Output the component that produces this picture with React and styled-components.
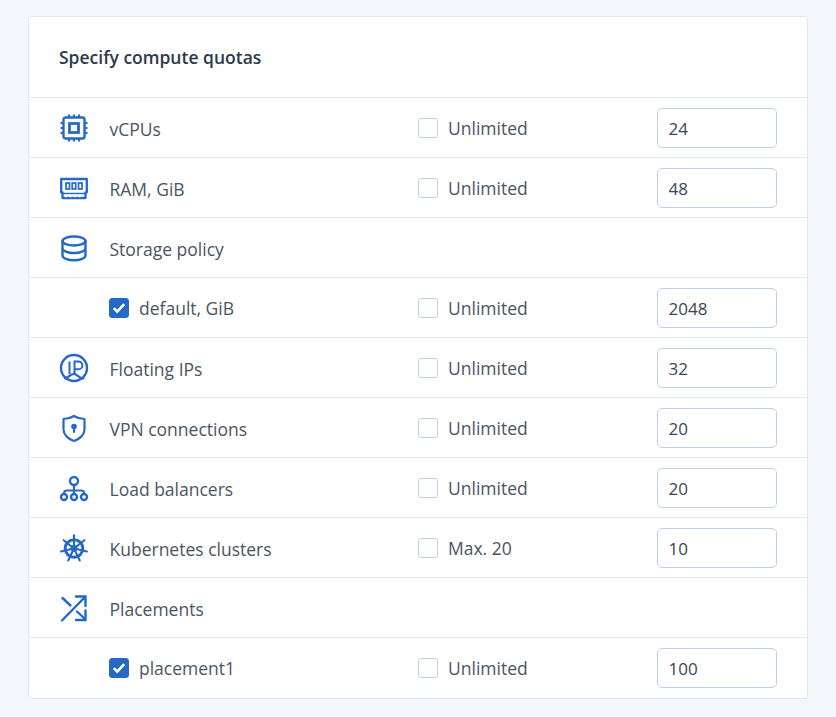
import React from 'react';
import styled, { createGlobalStyle } from 'styled-components';

const FONT = '"Open Sans", "Noto Sans", sans-serif';

const GlobalStyle = createGlobalStyle`
  html, body {
    margin: 0;
    padding: 0;
    background: #f4f7fc;
    font-family: ${FONT};
  }
`;

const Page = styled.div`
  width: 836px;
  height: 717px;
  padding: 16px 28px 0;
  box-sizing: border-box;
  overflow: hidden;
`;

const Card = styled.section`
  background: #fff;
  border: 1px solid #dfe8f6;
  border-radius: 3px;
  width: 780px;
  box-sizing: border-box;
  padding-bottom: 1px;
`;

const Title = styled.h2`
  margin: 0;
  height: 80px;
  padding: 0 30px 1px;
  box-sizing: border-box;
  display: flex;
  align-items: center;
  font-size: 17.5px;
  font-weight: 600;
  color: #2c3a4d;
`;

const Row = styled.div`
  display: grid;
  grid-template-columns: 80px 309px 239px 120px;
  align-items: center;
  height: 60px;
  box-sizing: border-box;
  border-top: 1px solid #dfe8f6;
  padding-right: 30px;
`;

const IconCell = styled.div`
  display: flex;
  justify-content: flex-start;
  padding-left: 30px;
  color: #2668c5;
`;

const Label = styled.div`
  font-size: 17.5px;
  color: #4a5564;
  display: flex;
  align-items: center;
  gap: 10px;
  line-height: 22px;
`;

const LabelText = styled.span`
  padding: ${p => (p.$withBox ? '0' : '2px 0 0 0.5px')};
`;

const Box = styled.span`
  width: 20px;
  height: 20px;
  box-sizing: border-box;
  border-radius: 3px;
  border: 1px solid ${p => (p.$checked ? '#2668c5' : '#bcd0ec')};
  background: ${p => (p.$checked ? '#2668c5' : '#fff')};
  display: inline-flex;
  align-items: center;
  justify-content: center;
  flex: none;
`;

const ValueInput = styled.input`
  width: 120px;
  height: 40px;
  box-sizing: border-box;
  border: 1px solid #bcd0ec;
  border-radius: 5px;
  padding: 1px 10.5px 0;
  font: 17px ${FONT};
  color: #3a4556;
  background: #fff;
  outline: none;
`;

const Svg = ({ children }) => (
  <svg width="30" height="30" viewBox="0 0 30 30" fill="none" stroke="currentColor" strokeWidth="2" strokeLinecap="round" strokeLinejoin="round">
    {children}
  </svg>
);

const CpuIcon = () => (
  <Svg>
    <rect x="4.500" y="4.500" width="21" height="21" rx="2" strokeWidth="2.400" />
    <rect x="10.500" y="10.500" width="9" height="9" strokeWidth="2.800" strokeLinejoin="miter" />
    <path d="M10 1.500v3M15 1.500v3M20 1.500v3M10 25.500v3M15 25.500v3M20 25.500v3M1.500 10h3M1.500 15h3M1.500 20h3M25.500 10h3M25.500 15h3M25.500 20h3" strokeLinecap="butt" strokeWidth="2.200" />
  </Svg>
);

const RamIcon = () => (
  <Svg>
    <path d="M2.200 6h25.600v13.500h-1.300V25H3.500v-5.500H2.200z" strokeWidth="2.300" strokeLinecap="butt" strokeLinejoin="round" />
    <path d="M3.500 20.500h23" strokeWidth="1.500" strokeLinecap="butt" />
    <rect x="7" y="10" width="3.500" height="6" strokeWidth="1.700" strokeLinejoin="miter" />
    <rect x="13.200" y="10" width="3.500" height="6" strokeWidth="1.700" strokeLinejoin="miter" />
    <rect x="19.500" y="10" width="3.500" height="6" strokeWidth="1.700" strokeLinejoin="miter" />
    <path d="M6 23h18" stroke="#fff" strokeDasharray="2 2.500" strokeWidth="2.400" strokeLinecap="butt" />
  </Svg>
);

const DbIcon = () => (
  <Svg>
    <ellipse cx="15" cy="8" rx="11.500" ry="4.500" strokeWidth="2.400" />
    <path d="M3.500 8v14.500c0 2.600 5.200 4.800 11.500 4.800s11.500-2.200 11.500-4.800V8M3.500 15.200c0 2.600 5.200 4.800 11.500 4.800s11.500-2.200 11.500-4.800" strokeWidth="2.400" />
  </Svg>
);

const IpIcon = () => (
  <Svg>
    <circle cx="15" cy="15" r="13" strokeWidth="2.400" />
    <path d="M10.500 8.500v12.500M15.500 21V8.500h4a3.900 3.900 0 0 1 0 7.800h-4" strokeWidth="2" strokeLinecap="butt" strokeLinejoin="miter" />
    <path d="M6 25.500c3.500-1 5.500-4.500 9-4.500 3.500 0 5 4.500 9.500 4.500" strokeWidth="2.200" />
  </Svg>
);

const ShieldIcon = () => (
  <Svg>
    <path d="M15 3c3.200 2 7 3 10.500 3v10.500c0 5-4.500 9.500-10.500 11.500-6-2-10.500-6.500-10.500-11.500V6C8 6 11.800 5 15 3z" strokeWidth="2.200" />
    <circle cx="15" cy="13.500" r="2.800" fill="currentColor" stroke="none" />
    <path d="M15 14v5" strokeWidth="2.200" />
  </Svg>
);

const TreeIcon = () => (
  <Svg>
    <circle cx="15" cy="8" r="4" strokeWidth="2.400" />
    <circle cx="5" cy="24" r="3" strokeWidth="2.400" />
    <circle cx="15" cy="24" r="3" strokeWidth="2.400" />
    <circle cx="25" cy="24" r="3" strokeWidth="2.400" />
    <path d="M15 12v9M5 21v-1a2.500 2.500 0 0 1 2.500-2.500h15A2.500 2.500 0 0 1 25 20v1" strokeWidth="2.200" strokeLinecap="butt" />
  </Svg>
);

const helmSpokes = [0, 1, 2, 3, 4, 5, 6].map(i => (i * 360) / 7);

const HelmIcon = () => (
  <Svg>
    <circle cx="15" cy="15.500" r="8.800" strokeWidth="3" />
    <circle cx="15" cy="15.500" r="3.400" fill="currentColor" stroke="none" />
    {helmSpokes.map(a => (
      <g key={a} transform={`rotate(${a} 15 15.500)`}>
        <path d="M15 14V2.200" strokeWidth="2.100" />
      </g>
    ))}
  </Svg>
);

const ShuffleIcon = () => (
  <Svg>
    <path d="M3 27.500 26.500 3.500M17 3.500h9.500V13M3.500 5l8 7.500M18 18.500l8.500 8M26.500 17.500v9.500H17" strokeWidth="2.400" strokeLinecap="round" strokeLinejoin="miter" />
  </Svg>
);

const Check = ({ checked }) => (
  <Box $checked={checked}>
    {checked && (
      <svg width="14" height="12" viewBox="0 0 14 12" fill="none">
        <path d="M1.800 6.200 5.200 9.600 12.200 2.200" stroke="#fff" strokeWidth="2.600" />
      </svg>
    )}
  </Box>
);

const rows = [
  { icon: <CpuIcon />, label: 'vCPUs', limit: 'Unlimited', value: '24' },
  { icon: <RamIcon />, label: 'RAM, GiB', limit: 'Unlimited', value: '48' },
  { icon: <DbIcon />, label: 'Storage policy' },
  { sub: true, label: 'default, GiB', limit: 'Unlimited', value: '2048' },
  { icon: <IpIcon />, label: 'Floating IPs', limit: 'Unlimited', value: '32' },
  { icon: <ShieldIcon />, label: 'VPN connections', limit: 'Unlimited', value: '20' },
  { icon: <TreeIcon />, label: 'Load balancers', limit: 'Unlimited', value: '20' },
  { icon: <HelmIcon />, label: 'Kubernetes clusters', limit: 'Max. 20', value: '10' },
  { icon: <ShuffleIcon />, label: 'Placements' },
  { sub: true, label: 'placement1', limit: 'Unlimited', value: '100' },
];

export default function App() {
  return (
    <Page>
      <GlobalStyle />
      <Card>
        <Title>Specify compute quotas</Title>
        {rows.map(row => (
          <Row key={row.label}>
            <IconCell>{row.icon}</IconCell>
            <Label>
              {row.sub && <Check checked />}
              <LabelText $withBox={row.sub}>{row.label}</LabelText>
            </Label>
            {row.limit ? (
              <Label>
                <Check />
                <LabelText $withBox>{row.limit}</LabelText>
              </Label>
            ) : <span />}
            {row.value ? <ValueInput defaultValue={row.value} /> : <span />}
          </Row>
        ))}
      </Card>
    </Page>
  );
}
